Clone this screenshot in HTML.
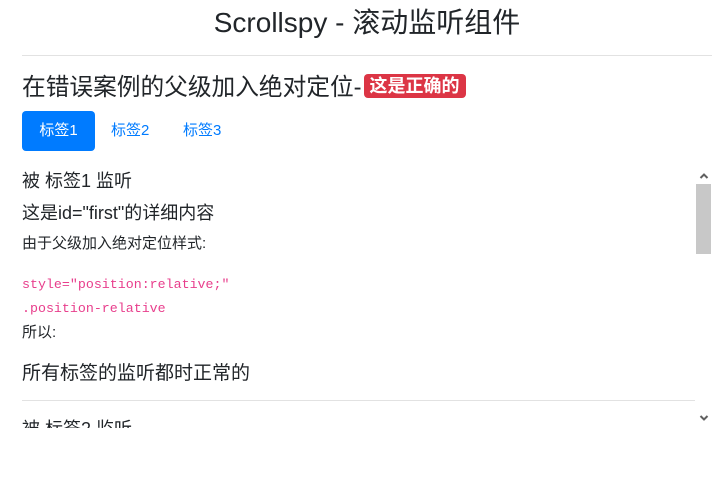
<!DOCTYPE html>
<html><head><meta charset="utf-8"><style>
body{margin:0;width:724px;height:485px;background:#fff;font-family:"Liberation Sans","Noto Sans CJK SC",sans-serif;color:#212529;position:relative;overflow:hidden}
.a{position:absolute;white-space:nowrap}
.code{font-family:"Liberation Mono","DejaVu Sans Mono",monospace;color:#e83e8c;font-size:13.3px}
</style></head><body>
<div class="a" style="left:0;width:734px;text-align:center;top:5px;font-size:28px;line-height:36px">Scrollspy - 滚动监听组件</div>
<div class="a" style="left:22px;width:690px;top:55px;border-top:1px solid #e2e2e2"></div>
<div class="a" style="left:22px;top:72px;font-size:23.7px;line-height:32px">在错误案例的父级加入绝对定位-<span style="display:inline-block;margin-left:2px;background:#dc3545;color:#fff;font-weight:bold;font-size:18px;line-height:22px;padding:1px 6px;border-radius:4px;vertical-align:3px">这是正确的</span></div>
<div class="a" style="left:22px;top:111px;width:73px;height:40px;background:#007bff;border-radius:4px;color:#fff;font-size:15px;line-height:40px;text-align:center">标签1</div>
<div class="a" style="left:111px;top:111px;color:#007bff;font-size:15px;line-height:40px">标签2</div>
<div class="a" style="left:183px;top:111px;color:#007bff;font-size:15px;line-height:40px">标签3</div>
<div class="a" style="left:22px;top:168px;font-size:18px;line-height:26px">被 标签1 监听</div>
<div class="a" style="left:22px;top:200px;font-size:18px;line-height:26px">这是id="first"的详细内容</div>
<div class="a" style="left:22px;top:234px;font-size:15px;line-height:20px">由于父级加入绝对定位样式:</div>
<div class="a code" style="left:22px;top:277px;line-height:16px">style="position:relative;"</div>
<div class="a code" style="left:22px;top:301px;line-height:16px">.position-relative</div>
<div class="a" style="left:22px;top:323px;font-size:15px;line-height:20px">所以:</div>
<div class="a" style="left:22px;top:361px;font-size:19px;line-height:26px">所有标签的监听都时正常的</div>
<div class="a" style="left:22px;width:673px;top:400px;border-top:1px solid #e2e2e2"></div>
<div class="a" style="left:22px;top:416px;height:12px;overflow:hidden;font-size:18px;line-height:26px">被 标签2 监听</div>
<div class="a" style="left:696px;top:168px;width:16px;height:260px;background:#fff"></div>
<div class="a" style="left:696px;top:184px;width:15px;height:70px;background:#c8c8c8"></div>
<svg class="a" style="left:699px;top:172px" width="10" height="8"><path d="M1.5 6 L5 2.5 L8.5 6" stroke="#606060" stroke-width="2" fill="none"/></svg>
<svg class="a" style="left:699px;top:414px" width="10" height="8"><path d="M1.5 2 L5 5.5 L8.5 2" stroke="#606060" stroke-width="2" fill="none"/></svg>
</body></html>
